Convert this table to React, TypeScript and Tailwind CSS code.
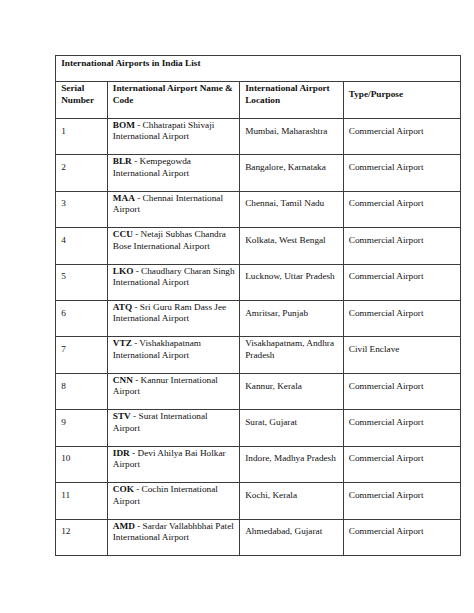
import { Fragment } from "react";

type Row = {
  no: string;
  code: string;
  name: string;
  location: string;
  purpose: string;
};

const rows: Row[] = [
  { no: "1", code: "BOM", name: "Chhatrapati Shivaji International Airport", location: "Mumbai, Maharashtra", purpose: "Commercial Airport" },
  { no: "2", code: "BLR", name: "Kempegowda International Airport", location: "Bangalore, Karnataka", purpose: "Commercial Airport" },
  { no: "3", code: "MAA", name: "Chennai International Airport", location: "Chennai, Tamil Nadu", purpose: "Commercial Airport" },
  { no: "4", code: "CCU", name: "Netaji Subhas Chandra Bose International Airport", location: "Kolkata, West Bengal", purpose: "Commercial Airport" },
  { no: "5", code: "LKO", name: "Chaudhary Charan Singh International Airport", location: "Lucknow, Uttar Pradesh", purpose: "Commercial Airport" },
  { no: "6", code: "ATQ", name: "Sri Guru Ram Dass Jee International Airport", location: "Amritsar, Punjab", purpose: "Commercial Airport" },
  { no: "7", code: "VTZ", name: "Vishakhapatnam International Airport", location: "Visakhapatnam, Andhra Pradesh", purpose: "Civil Enclave" },
  { no: "8", code: "CNN", name: "Kannur International Airport", location: "Kannur, Kerala", purpose: "Commercial Airport" },
  { no: "9", code: "STV", name: "Surat International Airport", location: "Surat, Gujarat", purpose: "Commercial Airport" },
  { no: "10", code: "IDR", name: "Devi Ahilya Bai Holkar Airport", location: "Indore, Madhya Pradesh", purpose: "Commercial Airport" },
  { no: "11", code: "COK", name: "Cochin International Airport", location: "Kochi, Kerala", purpose: "Commercial Airport" },
  { no: "12", code: "AMD", name: "Sardar Vallabhbhai Patel International Airport", location: "Ahmedabad, Gujarat", purpose: "Commercial Airport" },
];

function Cell({ children, bold = false }: { children: React.ReactNode; bold?: boolean }) {
  return (
    <div className={`border-r border-b border-[#3c3c3c] pl-[5px] pr-[3px] pt-[1px] ${bold ? "font-bold" : ""}`}>
      <div className="flex h-[23px] items-center">
        <div>{children}</div>
      </div>
    </div>
  );
}

export default function App() {
  return (
    <div className="min-h-[613px] bg-white pl-[55.2px] pt-[55.2px] font-['Liberation_Serif',serif] text-[9.25px] leading-[11.5px] text-[#111]">
      <div className="grid w-[405.8px] grid-cols-[51.6px_132.4px_103.6px_117.2px] grid-rows-[26px_36.6px] auto-rows-[36.45px] border-l border-t border-[#3c3c3c]">
        <div className="col-span-4 border-r border-b border-[#3c3c3c] pl-[5px] pt-[1.5px] font-bold">
          International Airports in India List
        </div>

        <Cell bold>Serial Number</Cell>
        <Cell bold>International Airport Name &amp; Code</Cell>
        <Cell bold>International Airport Location</Cell>
        <Cell bold>Type/Purpose</Cell>

        {rows.map((r) => (
          <Fragment key={r.no}>
            <Cell>{r.no}</Cell>
            <Cell>
              <span className="font-bold">{r.code}</span> - {r.name}
            </Cell>
            <Cell>{r.location}</Cell>
            <Cell>{r.purpose}</Cell>
          </Fragment>
        ))}
      </div>
    </div>
  );
}
